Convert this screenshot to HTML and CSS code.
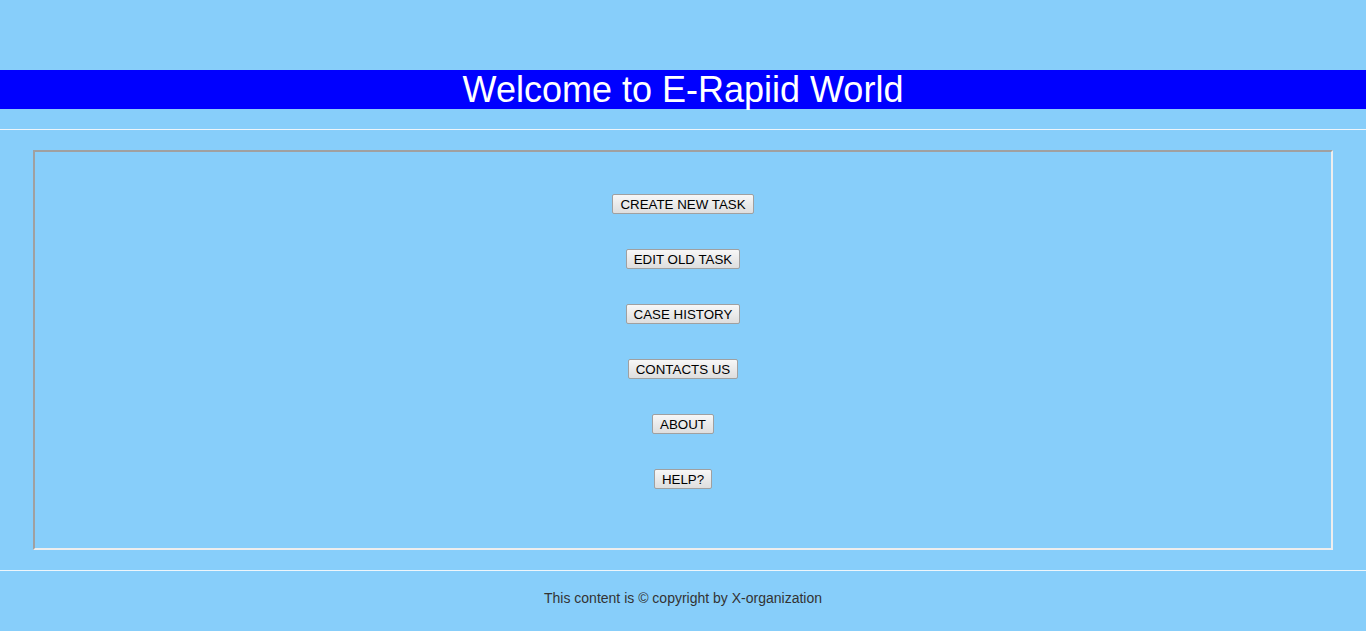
FILE: index.html
```html
<!DOCTYPE html>
<html>
<head>
<meta charset="utf-8">
<title>E-Rapiid World</title>
<link rel="stylesheet" href="styles.css">
</head>
<body>
<header class="top">
  <h1 class="title">Welcome to E-Rapiid World</h1>
</header>
<hr class="rule rule-top">
<main class="panel">
  <button class="btn">CREATE NEW TASK</button>
  <button class="btn">EDIT OLD TASK</button>
  <button class="btn">CASE HISTORY</button>
  <button class="btn">CONTACTS US</button>
  <button class="btn">ABOUT</button>
  <button class="btn">HELP?</button>
</main>
<hr class="rule rule-bottom">
<footer class="foot">This content is &copy; copyright by X-organization</footer>
</body>
</html>
```
FILE: styles.css
```css
html, body {
  margin: 0;
  padding: 0;
}
body {
  background: #87cefa;
  font-family: "Liberation Sans", Arial, sans-serif;
  height: 631px;
  overflow: hidden;
}
.top {
  padding-top: 70px;
}
.title {
  margin: 0;
  background: #0000ff;
  color: #ffffff;
  font-weight: normal;
  font-size: 36px;
  height: 39px;
  line-height: 40px;
  text-align: center;
}
.rule {
  border: 0;
  border-top: 1px solid #eef6fb;
  margin: 0;
  height: 0;
}
.rule-top {
  margin-top: 20px;
}
.panel {
  margin: 20px 33px 0 33px;
  height: 354px;
  border: 2px solid;
  border-color: #a0a0a0 #eeeeee #eeeeee #a0a0a0;
  display: flex;
  flex-direction: column;
  align-items: center;
  gap: 35px;
  padding-top: 42px;
  box-sizing: content-box;
}
.btn {
  font-family: "Liberation Sans", Arial, sans-serif;
  font-size: 13.33px;
  color: #000;
  height: 20px;
  padding: 1px 7px 0 7px;
  border: 1px solid #a0a0a0;
  border-radius: 2px;
  background: linear-gradient(#f7f7f7, #dedede);
  line-height: 17px;
}
.rule-bottom {
  margin-top: 20px;
}
.foot {
  text-align: center;
  color: #333;
  font-size: 14px;
  padding-top: 19px;
}
```
